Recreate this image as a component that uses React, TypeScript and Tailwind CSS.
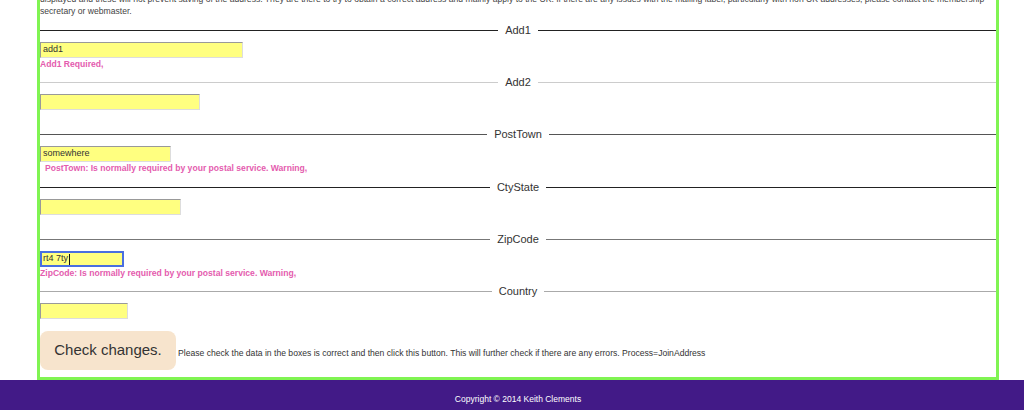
import React from 'react';

type Field = {
  label: string;
  value: string;
  width: string;
  line: string;
  error?: string;
  indent?: boolean;
  focused?: boolean;
  height: string;
};

const fields: Field[] = [
  { label: 'Add1', value: 'add1', width: 'w-[203px]', line: 'bg-[#222]', error: 'Add1 Required,', height: 'h-[52px]' },
  { label: 'Add2', value: '', width: 'w-[160px]', line: 'bg-[#ccc]', height: 'h-[52px]' },
  {
    label: 'PostTown',
    value: 'somewhere',
    width: 'w-[131px]',
    line: 'bg-[#555]',
    error: 'PostTown: Is normally required by your postal service. Warning,',
    indent: true,
    height: 'h-[53px]',
  },
  { label: 'CtyState', value: '', width: 'w-[141px]', line: 'bg-[#222]', height: 'h-[52px]' },
  {
    label: 'ZipCode',
    value: 'rt4 7ty',
    width: 'w-[84px]',
    line: 'bg-[#777]',
    error: 'ZipCode: Is normally required by your postal service. Warning,',
    focused: true,
    height: 'h-[52px]',
  },
  { label: 'Country', value: '', width: 'w-[88px]', line: 'bg-[#aaa]', height: 'h-[46px]' },
];

const FieldBlock: React.FC<{ f: Field }> = ({ f }) => (
  <div className={`${f.height} flex flex-col`}>
    <div className="flex items-center h-[12px]">
      <div className={`flex-1 h-px ${f.line}`} />
      <span className="px-[7px] text-[11px] leading-[12px] text-[#333]">{f.label}</span>
      <div className={`flex-1 h-px ${f.line}`} />
    </div>
    <div
      className={`mt-[6px] ${f.width} h-[16px] bg-[#ffff80] flex items-center text-[9px] text-[#333] ${
        f.focused
          ? 'border-2 border-[#4a6fe0] pl-[1px]'
          : 'border-t border-l border-[#999] border-b border-r border-b-[#ddd] border-r-[#ddd] pl-[2px]'
      }`}
    >
      {f.value}
      {f.focused && <span className="ml-px w-px h-[11px] bg-[#111]" />}
    </div>
    {f.error && (
      <div className={`mt-[1px] text-[8.6px] leading-[10px] font-bold text-[#e45cae] ${f.indent ? 'pl-[5px]' : ''}`}>
        {f.error}
      </div>
    )}
  </div>
);

export default function App() {
  return (
    <div className="w-[1024px] h-[410px] overflow-hidden bg-white font-['Liberation_Sans',Arial,sans-serif]">
      <div className="ml-[37px] w-[962px] h-[380px] border-x-[3px] border-b-[3px] border-[#80f452] flex flex-col">
        <div className="-mt-[7px] text-[8.6px] leading-[12px] text-[#444] whitespace-nowrap">
          displayed and these will not prevent saving of the address. They are there to try to obtain a correct address and mainly apply to the UK. If there are any issues with the mailing label, particularly with non UK addresses, please contact the membership
          <br />
          secretary or webmaster.
        </div>
        <div className="mt-[7px] flex flex-col">
          {fields.map((f) => (
            <FieldBlock key={f.label} f={f} />
          ))}
        </div>
        <div className="flex items-center">
          <button className="w-[136px] h-[39px] rounded-[8px] bg-[#f7e4cd] text-[15px] text-[#333]">
            Check changes.
          </button>
          <span className="ml-[2px] mt-[5px] text-[8.6px] text-[#333]">
            Please check the data in the boxes is correct and then click this button. This will further check if there are any errors. Process=JoinAddress
          </span>
        </div>
      </div>
      <footer className="h-[30px] bg-[#421a87] flex">
        <div className="ml-[37px] w-[962px] pt-[14px] text-center text-[8.5px] leading-[10px] text-white">
          Copyright © 2014 Keith Clements
        </div>
      </footer>
    </div>
  );
}
